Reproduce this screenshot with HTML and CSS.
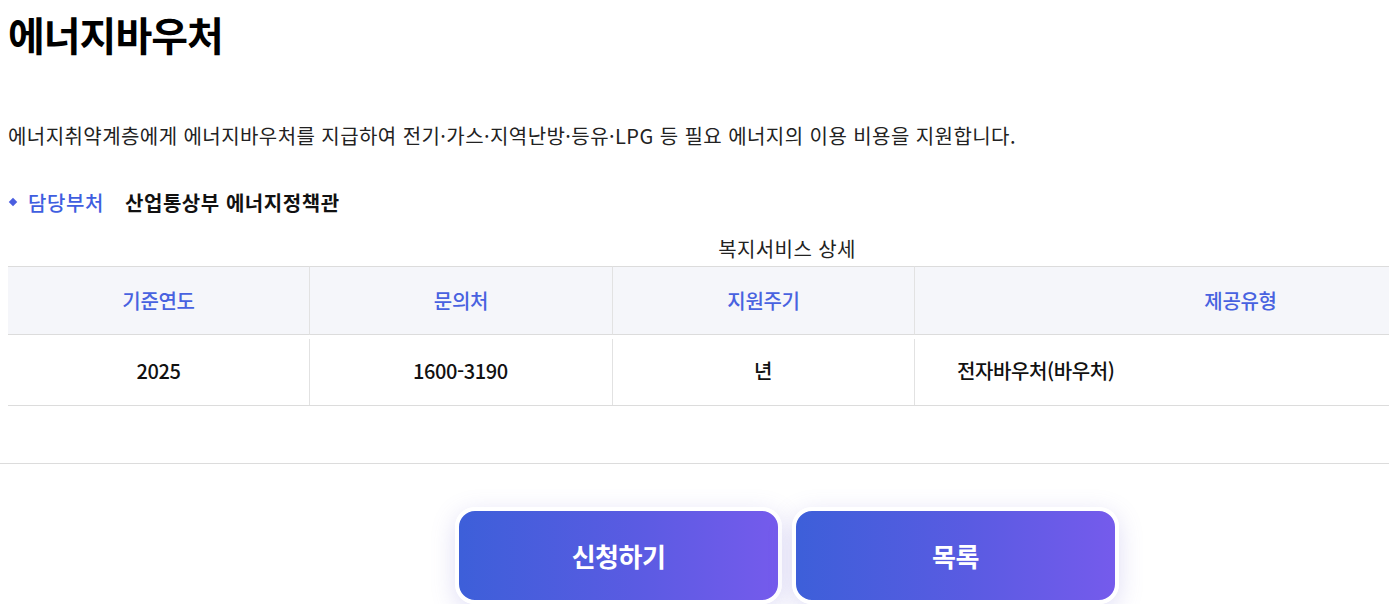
FILE: index.html
```html
<!DOCTYPE html>
<html lang="ko">
<head>
<meta charset="utf-8">
<title>에너지바우처</title>
<link rel="stylesheet" href="styles.css">
</head>
<body>
<div class="page">
  <h1 class="title">에너지바우처</h1>
  <p class="desc">에너지취약계층에게 에너지바우처를 지급하여 전기·가스·지역난방·등유·LPG 등 필요 에너지의 이용 비용을 지원합니다.</p>
  <div class="dept">
    <span class="bullet"></span>
    <span class="dept-label">담당부처</span>
    <span class="dept-name">산업통상부 에너지정책관</span>
  </div>
  <table class="detail">
    <caption>복지서비스 상세</caption>
    <thead>
      <tr>
        <th class="c1">기준연도</th>
        <th class="c2">문의처</th>
        <th class="c3">지원주기</th>
        <th class="c4">제공유형</th>
      </tr>
    </thead>
    <tbody>
      <tr>
        <td class="c1">2025</td>
        <td class="c2">1600-3190</td>
        <td class="c3">년</td>
        <td class="c4 left">전자바우처(바우처)</td>
      </tr>
    </tbody>
  </table>
  <div class="rule"></div>
  <div class="actions">
    <button class="btn" type="button">신청하기</button>
    <button class="btn" type="button">목록</button>
  </div>
</div>
</body>
</html>
```
FILE: styles.css
```css
html, body {
  margin: 0;
  padding: 0;
  overflow: hidden;
  background: #fff;
}
body {
  font-family: "Noto Sans CJK KR", "Noto Sans", sans-serif;
  color: #111;
}
.page {
  width: 1558px;
  padding: 0 8px;
}
.title {
  margin: 0;
  padding-top: 6px;
  font-size: 40px;
  font-weight: 700;
  line-height: 56px;
  letter-spacing: -1px;
  color: #000;
}
.desc {
  margin: 60px 0 0;
  font-size: 20px;
  line-height: 28px;
  letter-spacing: 0.43px;
  color: #222;
}
.dept {
  display: flex;
  align-items: center;
  margin-top: 38px;
  height: 28px;
  font-size: 20px;
  letter-spacing: 0.3px;
}
.bullet {
  width: 6px;
  height: 6px;
  background: #4a5ee0;
  transform: rotate(45deg);
  margin: 0 12px 0 2px;
}
.dept-label {
  color: #3f5ee0;
  font-weight: 500;
  letter-spacing: 0.6px;
  margin-right: 21px;
}
.dept-name {
  color: #111;
  font-weight: 700;
  letter-spacing: 0.55px;
}
.detail {
  margin-top: 20px;
  width: 100%;
  border-collapse: separate;
  border-spacing: 0;
  table-layout: fixed;
}
.detail caption {
  font-size: 20px;
  line-height: 26px;
  color: #222;
  letter-spacing: 0.4px;
  padding-bottom: 4px;
}
.detail th, .detail td {
  text-align: center;
}
.detail th {
  height: 67px;
  background: #f5f6fa;
  color: #4862e0;
  font-size: 20px;
  font-weight: 500;
  letter-spacing: -0.3px;
  border-top: 1px solid #dcdcdc;
  border-bottom: 1px solid #dcdcdc;
  border-left: 1px solid #e2e2e2;
  padding: 0;
}
.detail th.c1 { border-left: none; }
.detail td {
  height: 70px;
  font-size: 20px;
  font-weight: 500;
  letter-spacing: -0.4px;
  color: #111;
  border-bottom: 1px solid #dcdcdc;
  padding: 0;
}
.detail td + td {
  background-image: linear-gradient(#e2e2e2, #e2e2e2);
  background-size: 1px calc(100% - 4px);
  background-position: 0 4px;
  background-repeat: no-repeat;
}
.detail td.left {
  text-align: left;
  padding-left: 43px;
}
.c1 { width: 301px; }
.c2 { width: 302px; }
.c3 { width: 301px; }
.rule {
  height: 1px;
  background: #dcdcdc;
  margin: 57px -8px 0;
}
.actions {
  display: flex;
  justify-content: center;
  gap: 10px;
  margin-top: 43px;
}
.btn {
  width: 327px;
  height: 97px;
  border: 4px solid #fff;
  border-radius: 20px;
  background: linear-gradient(90deg, #3d5fd9 0%, #5a5be2 55%, #755bec 100%);
  color: #fff;
  font-family: "Noto Sans CJK KR", "Noto Sans", sans-serif;
  font-size: 26px;
  font-weight: 700;
  letter-spacing: -0.5px;
  box-shadow: 0 6px 24px rgba(110, 100, 210, 0.22);
  cursor: pointer;
}
```
